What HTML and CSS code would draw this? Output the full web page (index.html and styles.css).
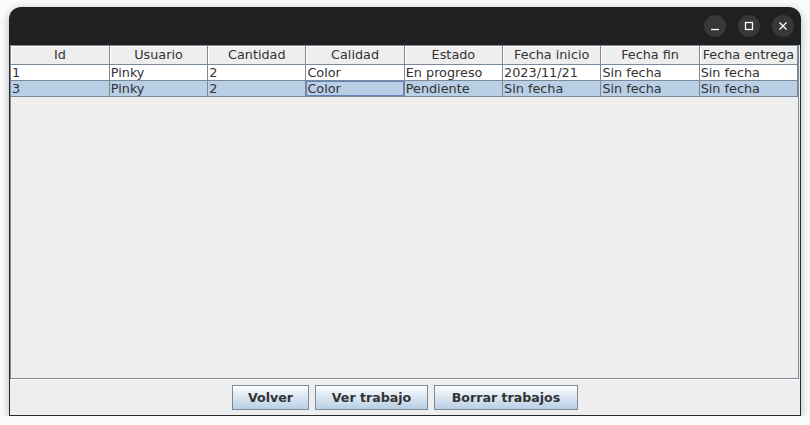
FILE: index.html
```html
<!DOCTYPE html>
<html>
<head>
<meta charset="utf-8">
<link rel="stylesheet" href="styles.css">
</head>
<body>
<div class="window">
  <div class="titlebar">
    <div class="tb-btn" title="Minimizar"><svg width="22" height="22" viewBox="0 0 22 22"><path d="M7 14.5h8" stroke="#fff" stroke-width="1.3"/></svg></div>
    <div class="tb-btn" title="Maximizar"><svg width="22" height="22" viewBox="0 0 22 22"><rect x="7.5" y="7.5" width="7" height="7" fill="none" stroke="#fff" stroke-width="1.3"/></svg></div>
    <div class="tb-btn" title="Cerrar"><svg width="22" height="22" viewBox="0 0 22 22"><path d="M7.5 7.5l7 7M14.5 7.5l-7 7" stroke="#fff" stroke-width="1.3"/></svg></div>
  </div>
  <div class="content">
    <div class="scrollpane">
      <table class="grid">
        <thead>
          <tr><th>Id</th><th>Usuario</th><th>Cantidad</th><th>Calidad</th><th>Estado</th><th>Fecha inicio</th><th>Fecha fin</th><th>Fecha entrega</th></tr>
        </thead>
        <tbody>
          <tr><td>1</td><td>Pinky</td><td>2</td><td>Color</td><td>En progreso</td><td>2023/11/21</td><td>Sin fecha</td><td>Sin fecha</td></tr>
          <tr class="selected"><td>3</td><td>Pinky</td><td>2</td><td class="focus">Color</td><td>Pendiente</td><td>Sin fecha</td><td>Sin fecha</td><td>Sin fecha</td></tr>
        </tbody>
      </table>
    </div>
    <div class="buttons">
      <button class="btn">Volver</button>
      <button class="btn">Ver trabajo</button>
      <button class="btn">Borrar trabajos</button>
    </div>
  </div>
</div>
</body>
</html>
```

FILE: styles.css
```css
html, body {
  margin: 0;
  padding: 0;
  background: #fafafa;
}
body {
  font-family: "DejaVu Sans", sans-serif;
  font-size: 12.8px;
  color: #333333;
}
.window {
  margin: 7px 0 0 9px;
  width: 792px;
  height: 409px;
  display: flex;
  flex-direction: column;
  border-radius: 12px 12px 0 0;
  box-shadow: 0 2px 8px rgba(0,0,0,0.28);
  background: #eeeeee;
}
.titlebar {
  height: 38px;
  background: #202020;
  border-radius: 12px 12px 0 0;
  display: flex;
  justify-content: flex-end;
  align-items: center;
  gap: 12px;
  padding-right: 7px;
  box-sizing: border-box;
}
.tb-btn {
  width: 22px;
  height: 22px;
  border-radius: 50%;
  background: #383838;
  display: flex;
}
.content {
  flex: 1;
  display: flex;
  flex-direction: column;
  border: 1px solid #2a2a2a;
  border-top: none;
  background: #eeeeee;
}
.scrollpane {
  flex: 1;
  border: 1px solid #7a8a99;
  border-top: none;
  margin-right: 1px;
  box-shadow: 0 1px 0 #ffffff;
  background: #eeeeee;
  overflow: hidden;
}
.grid {
  border-collapse: collapse;
  table-layout: fixed;
  width: 787px;
}
.grid th {
  height: 18px;
  padding: 0;
  font-weight: normal;
  text-align: center;
  background: #eeeeee;
  border: 1px solid #7a8a99;
  box-shadow: inset 1px 1px 0 #ffffff;
  line-height: 18px;
  white-space: nowrap;
  overflow: hidden;
}
.grid td {
  height: 15px;
  padding: 0 1px;
  line-height: 14px;
  background: #ffffff;
  border: 1px solid #7a8a99;
  border-top: none;
  white-space: nowrap;
  overflow: hidden;
}
.grid tr.selected td {
  background: #b8cfe5;
}
.grid td.focus {
  box-shadow: inset 0 0 0 1px #6382bf;
}
.grid th:first-child, .grid td:first-child { border-left: none; }
.buttons {
  height: 36px;
  display: flex;
  justify-content: center;
  align-items: center;
  gap: 6px;
  padding-top: 1px;
  box-sizing: border-box;
}
.btn {
  height: 25px;
  padding: 0;
  font-family: "DejaVu Sans", sans-serif;
  font-weight: bold;
  font-size: 12.6px;
  color: #333333;
  border: 1px solid #7a8a99;
  background: linear-gradient(#ffffff, #dde8f3 45%, #b8cfe5);
}
.btn:nth-child(1) { width: 77px; }
.btn:nth-child(2) { width: 113px; }
.btn:nth-child(3) { width: 144px; }
```
